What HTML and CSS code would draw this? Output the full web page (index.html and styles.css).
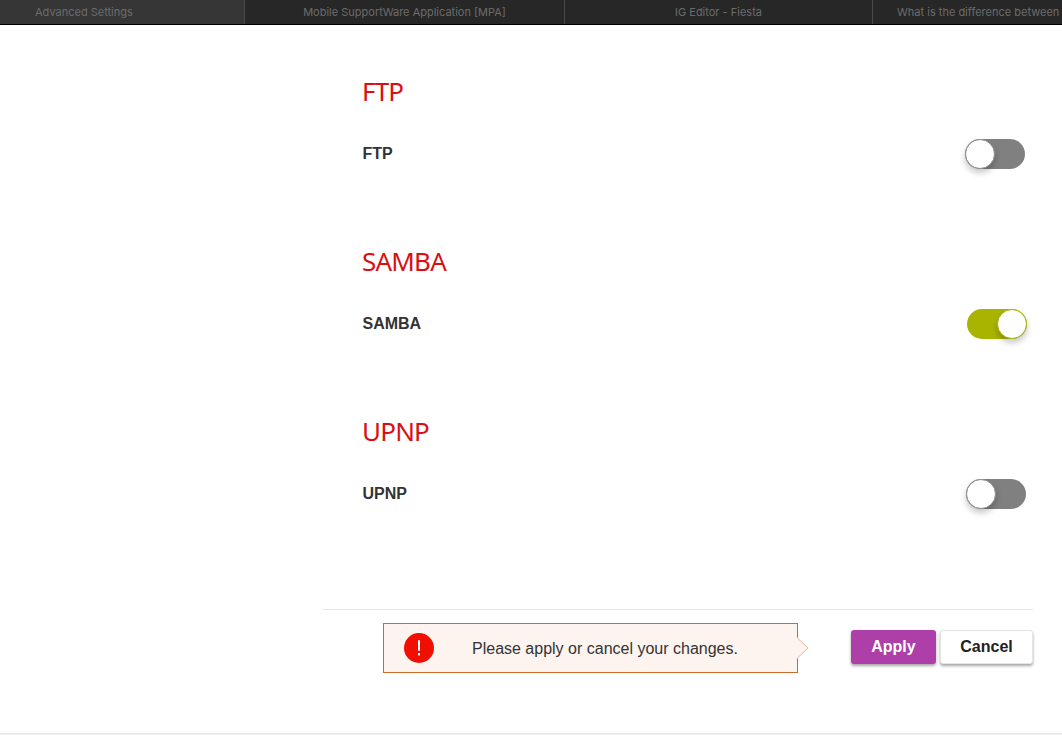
FILE: index.html
```html
<!DOCTYPE html>
<html lang="en">
<head>
    <meta charset="UTF-8">
    <title>Advanced Settings</title>
    <link rel="stylesheet" href="styles.css">
</head>
<body>
    <div class="tabs">
        <div class="tab tab-active">Advanced Settings</div>
        <div class="tab tab-mpa">Mobile SupportWare Application [MPA]</div>
        <div class="tab tab-ig">IG Editor - Fiesta</div>
        <div class="tab tab-last">What is the difference between the</div>
    </div>
    <div class="content">
        <div class="section">
            <h2>FTP</h2>
            <div class="row">
                <span class="label">FTP</span>
                <span class="toggle toggle-ftp"><span class="knob"></span></span>
            </div>
        </div>
        <div class="section">
            <h2>SAMBA</h2>
            <div class="row">
                <span class="label">SAMBA</span>
                <span class="toggle toggle-on"><span class="knob"></span></span>
            </div>
        </div>
        <div class="section">
            <h2>UPNP</h2>
            <div class="row">
                <span class="label">UPNP</span>
                <span class="toggle"><span class="knob"></span></span>
            </div>
        </div>
    </div>
    <div class="footer">
        <div class="message">
            <svg class="alert-icon" width="30" height="30" viewBox="0 0 30 30">
                <circle cx="15" cy="15" r="15" fill="#f00f00"/>
                <rect x="14" y="7" width="2" height="11" rx="1" fill="#fff"/>
                <rect x="14" y="20" width="2" height="2.4" fill="#fff"/>
            </svg>
            <span class="message-text">Please apply or cancel your changes.</span>
            <svg class="message-arrow" width="12" height="22" viewBox="0 0 12 22">
                <path d="M0 0.5 L11 11 L0 21.5" fill="#fdf4f0" stroke="#eeb595" stroke-width="1"/>
            </svg>
        </div>
        <button class="btn btn-apply">Apply</button>
        <button class="btn btn-cancel">Cancel</button>
    </div>
    <div class="bottom-line"></div>
</body>
</html>
```
FILE: styles.css
```css
html, body {
    margin: 0;
    padding: 0;
}
body {
    font-family: "Liberation Sans", Arial, sans-serif;
    background-color: #fff;
    height: 735px;
    overflow: hidden;
    display: flex;
    flex-direction: column;
}
.tabs {
    display: flex;
    height: 24px;
    background-color: #272727;
    border-bottom: 1px solid #000;
    font-family: "Inter", "Liberation Sans", sans-serif;
    font-size: 11px;
    line-height: 24px;
    color: #6b6b6b;
}
.tab {
    box-sizing: border-box;
    border-right: 1px solid #4a4a4a;
    text-align: center;
    white-space: nowrap;
    overflow: hidden;
}
.tab-active {
    width: 245px;
    padding-left: 35px;
    text-align: left;
    background-color: #363636;
}
.tab-mpa {
    width: 320px;
}
.tab-ig {
    width: 308px;
}
.tab-last {
    flex: 1;
    padding-left: 24px;
    text-align: left;
    border-right: 0;
}
.content {
    padding: 0 36px 0 362px;
    height: 584px;
    box-sizing: border-box;
}
.section {
    height: 170px;
    padding-top: 48px;
    box-sizing: border-box;
}
h2 {
    margin: 0;
    height: 36px;
    font-family: "Noto Sans", sans-serif;
    font-size: 26px;
    line-height: 36px;
    font-weight: 400;
    letter-spacing: -0.8px;
    color: #d9100f;
}
.row {
    display: flex;
    align-items: center;
    justify-content: space-between;
    height: 30px;
    margin-top: 30px;
}
.label {
    padding-left: 0.5px;
    font-size: 16px;
    font-weight: 700;
    color: #333;
}
.toggle {
    width: 60px;
    height: 30px;
    border-radius: 15px;
    background-color: #808080;
    display: flex;
}
.toggle-ftp {
    margin-right: 1px;
}
.toggle-on {
    margin-right: -1px;
    background-color: #a9b400;
    justify-content: flex-end;
}
.knob {
    box-sizing: border-box;
    width: 30px;
    height: 30px;
    border-radius: 50%;
    background-color: #fff;
    border: 1px solid #8c8c8c;
    box-shadow: 0 4px 6px rgba(0, 0, 0, 0.22);
}
.toggle-on .knob {
    border-color: #a9b400;
}
.footer {
    margin-left: 323px;
    margin-right: 29px;
    height: 124px;
    box-sizing: border-box;
    border-top: 1px solid #e4e4e4;
    display: flex;
    align-items: flex-start;
    padding-left: 60px;
}
.message {
    position: relative;
    box-sizing: border-box;
    width: 415px;
    height: 50px;
    margin-top: 13px;
    padding-left: 20px;
    display: flex;
    align-items: center;
    background-color: #fdf4f0;
    border: 1px solid #c96c28;
}
.message-text {
    margin-left: 38px;
    padding-top: 2px;
    font-size: 16px;
    color: #333;
}
.message-arrow {
    position: absolute;
    right: -12px;
    top: 13px;
}
.btn {
    box-sizing: border-box;
    height: 34px;
    margin-top: 20px;
    padding: 0;
    border-radius: 3px;
    font-family: "Liberation Sans", Arial, sans-serif;
    font-size: 16px;
    font-weight: 700;
    box-shadow: 0 2px 3px rgba(0, 0, 0, 0.35);
}
.btn-apply {
    width: 85px;
    margin-left: 53px;
    border: 0;
    background-color: #ae3fa9;
    color: #fff;
}
.btn-cancel {
    width: 93px;
    margin-left: 4px;
    border: 1px solid #e4e4e4;
    background-color: #fff;
    color: #222;
}
.bottom-line {
    height: 2px;
    background-color: #ececec;
}
```
